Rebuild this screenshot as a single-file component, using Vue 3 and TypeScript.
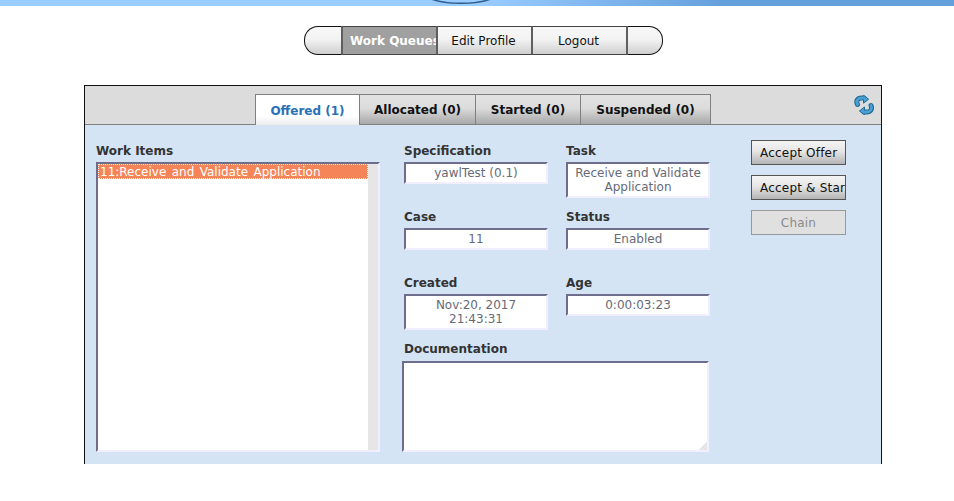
<script setup lang="ts">
const navItems = [
  { label: 'Work Queues', active: true },
  { label: 'Edit Profile', active: false },
  { label: 'Logout', active: false }
];

const tabs = [
  { label: 'Offered (1)', width: 105, active: true },
  { label: 'Allocated (0)', width: 116, active: false },
  { label: 'Started (0)', width: 105, active: false },
  { label: 'Suspended (0)', width: 130, active: false }
];
</script>

<template>
  <div class="banner">
    <svg class="banner-arc" width="70" height="6" viewBox="0 0 70 6">
      <path d="M2 -2 C 16 5, 52 5, 66 -2" fill="none" stroke="#2f5a8c" stroke-width="1.4" />
    </svg>
  </div>

  <nav class="nav">
    <div class="nav-cap nav-cap-left"></div>
    <div
      v-for="item in navItems"
      :key="item.label"
      class="nav-item"
      :class="{ active: item.active }"
    >
      <span>{{ item.label }}</span>
    </div>
    <div class="nav-cap nav-cap-right"></div>
  </nav>

  <section class="panel">
    <header class="tab-bar">
      <div class="tabs">
        <div
          v-for="tab in tabs"
          :key="tab.label"
          class="tab"
          :class="{ active: tab.active }"
          :style="{ width: tab.width + 'px' }"
        >
          {{ tab.label }}
        </div>
      </div>
      <svg class="refresh" width="20" height="20" viewBox="0 0 20 20">
        <g fill="none" stroke-linecap="round">
          <path d="M3.5 9.5 C1.6 6 3.6 3 7.5 3 L10 3" stroke="#1f6a98" stroke-width="5" />
          <path d="M17 10.5 C18.6 14 16.6 17 12.5 17 L10 17" stroke="#1f6a98" stroke-width="5" />
        </g>
        <path d="M9.5 0.3 L14.6 4.2 L9.5 8.2 Z" fill="#4a9fd0" stroke="#1f6a98" stroke-linejoin="round" />
        <path d="M10.5 12 L5.4 16 L10.5 19.8 Z" fill="#4a9fd0" stroke="#1f6a98" stroke-linejoin="round" />
        <g fill="none" stroke-linecap="round">
          <path d="M3.5 9.5 C1.6 6 3.6 3 7.5 3 L10 3" stroke="#4a9fd0" stroke-width="2.8" />
          <path d="M17 10.5 C18.6 14 16.6 17 12.5 17 L10 17" stroke="#4a9fd0" stroke-width="2.8" />
        </g>
      </svg>
    </header>

    <div class="content">
      <div class="list-col">
        <div class="label">Work Items</div>
        <div class="list inset">
          <div class="list-rows">
            <div class="list-row">11:Receive and Validate Application</div>
          </div>
          <div class="list-gutter"></div>
        </div>
      </div>

      <div class="details">
        <div class="field">
          <div class="label">Specification</div>
          <div class="value inset">yawlTest (0.1)</div>
        </div>
        <div class="field">
          <div class="label">Task</div>
          <div class="value inset">Receive and Validate Application</div>
        </div>
        <div class="field">
          <div class="label">Case</div>
          <div class="value inset">11</div>
        </div>
        <div class="field">
          <div class="label">Status</div>
          <div class="value inset">Enabled</div>
        </div>
        <div class="field">
          <div class="label">Created</div>
          <div class="value inset">Nov:20, 2017 21:43:31</div>
        </div>
        <div class="field">
          <div class="label">Age</div>
          <div class="value inset">0:00:03:23</div>
        </div>
        <div class="field doc">
          <div class="label">Documentation</div>
          <textarea class="doc-box inset"></textarea>
        </div>
      </div>

      <div class="actions">
        <button class="action">Accept Offer</button>
        <button class="action">Accept &amp; Start</button>
        <button class="action" disabled>Chain</button>
      </div>
    </div>
  </section>
</template>

<style>
html, body {
  background: #fff;
  overflow: hidden;
}
</style>

<style scoped>
.banner {
  position: relative;
  height: 6px;
  background: linear-gradient(90deg, #99ccff 0, #99ccff 480px, #66a0dc 720px, #66a0dc 100%);
  overflow: hidden;
}

.banner-arc {
  position: absolute;
  left: 427px;
  top: 0;
}

.nav {
  display: flex;
  width: 359px;
  height: 29px;
  margin: 20px 0 0 304px;
  font-family: "DejaVu Sans", sans-serif;
  font-size: 12px;
}

.nav-cap {
  flex: none;
  width: 37px;
  box-sizing: border-box;
  border: 1px solid #111;
  background: linear-gradient(#f7f7f7, #f3f3f3 45%, #cfcfcf);
}

.nav-cap-left {
  border-right: 0;
  border-radius: 14px 0 0 14px;
}

.nav-cap-right {
  width: 35px;
  border-left: 0;
  border-radius: 0 14px 14px 0;
}

.nav-item {
  flex: none;
  box-sizing: border-box;
  width: 95px;
  padding: 0 4px 0 2px;
  display: flex;
  align-items: center;
  justify-content: center;
  overflow: hidden;
  white-space: nowrap;
  color: #111;
  border-top: 1px solid #444;
  border-bottom: 1px solid #444;
  border-left: 2px solid #5f5f5f;
  background: linear-gradient(#f7f7f7, #f3f3f3 45%, #cfcfcf);
}

.nav-item:nth-child(4) {
  border-right: 2px solid #5f5f5f;
  width: 97px;
}

.nav-item.active {
  justify-content: flex-start;
  padding: 0 0 0 7px;
  color: #fff;
  font-weight: bold;
  background: #a0a0a0;
}

.panel {
  box-sizing: border-box;
  width: 798px;
  height: 379px;
  margin: 30px 0 0 84px;
  border: 1px solid #111;
  border-bottom: 0;
  background: #d4e4f5;
  font-family: "DejaVu Sans", sans-serif;
  display: flex;
  flex-direction: column;
}

.tab-bar {
  position: relative;
  box-sizing: border-box;
  height: 39px;
  flex: none;
  padding: 8px 0 0 170px;
  background: #dcdcdc;
  border-bottom: 1px solid #808080;
}

.tabs {
  display: flex;
  height: 31px;
}

.tab {
  box-sizing: border-box;
  height: 30px;
  display: flex;
  align-items: center;
  justify-content: center;
  font-size: 12px;
  font-weight: bold;
  color: #111;
  border: 1px solid #808080;
  border-left-width: 0;
  border-bottom: 0;
  background: linear-gradient(#e2e2e2, #dcdcdc 45%, #a8a8a8);
}

.tab.active {
  height: 31px;
  padding-top: 1px;
  color: #2a70b8;
  border-left-width: 1px;
  background: linear-gradient(#ffffff, #ffffff 70%, #ececec);
}

.refresh {
  position: absolute;
  left: 769px;
  top: 9px;
}

.content {
  flex: 1;
  min-height: 0;
  display: flex;
  padding: 18px 0 0 11px;
}

.label {
  padding-top: 1px;
  font-size: 12px;
  font-weight: bold;
  line-height: 15px;
  color: #333;
}

.inset {
  box-sizing: border-box;
  border-style: solid;
  border-width: 2px;
  border-color: #6e6e8c #f0eeff #f0eeff #6e6e8c;
  background: #fff;
}

.list-col {
  width: 284px;
  flex: none;
}

.list {
  display: flex;
  height: 290px;
  margin-top: 3px;
}

.list-rows {
  flex: 1;
  min-width: 0;
}

.list-row {
  box-sizing: border-box;
  height: 15px;
  padding: 1px 0 0 2px;
  font-size: 12px;
  line-height: 15px;
  word-spacing: 1.6px;
  white-space: nowrap;
  color: #fff;
  background: #f58458;
  outline: 1px dotted #fff;
  outline-offset: -1px;
}

.list-gutter {
  width: 10px;
  background: #e6e6e6;
}

.details {
  width: 306px;
  flex: none;
  margin-left: 24px;
  display: grid;
  grid-template-columns: 144px 144px;
  column-gap: 18px;
  grid-template-rows: 66px 66px 66px auto;
  align-content: start;
}

.value {
  margin-top: 3px;
  min-height: 22px;
  padding: 2px 4px;
  font-size: 12px;
  line-height: 14px;
  text-align: center;
  color: #666a78;
}

.doc {
  grid-column: 1 / 3;
}

.doc-box {
  display: block;
  width: 307px;
  height: 91px;
  margin: 4px 0 0 -2px;
  padding: 0;
  outline: none;
  resize: none;
  background: linear-gradient(135deg, transparent 50%, #e6e6e6 50%) no-repeat right bottom / 9px 9px, #fff;
}

.actions {
  width: 95px;
  margin-left: 41px;
  flex: none;
  margin-top: -3px;
  display: flex;
  flex-direction: column;
  gap: 10px;
}

.action {
  box-sizing: border-box;
  width: 95px;
  height: 25px;
  padding: 0 8px;
  overflow: hidden;
  white-space: nowrap;
  font-family: "DejaVu Sans", sans-serif;
  font-size: 12px;
  letter-spacing: 0.2px;
  color: #111;
  border: 1px solid #555;
  background: linear-gradient(#f4f4f4, #e6e6e6 45%, #b4b4b4);
}

.action:disabled {
  color: #8a8a8a;
  border-color: #999;
  background: #e0e0e0;
}
</style>
